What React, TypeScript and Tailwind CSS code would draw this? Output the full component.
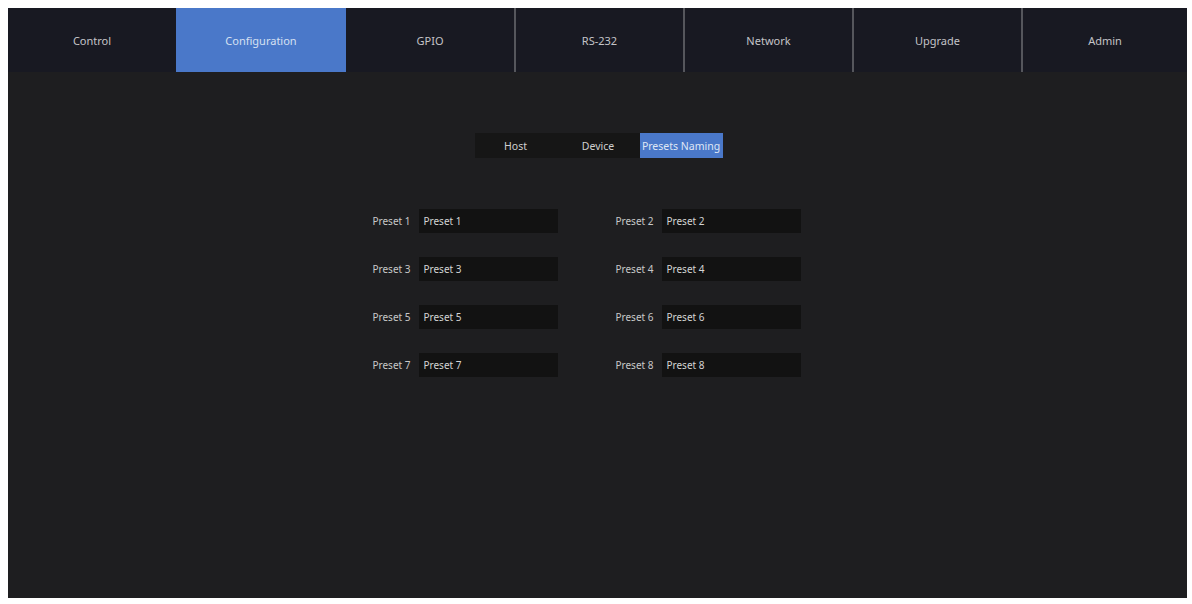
const tabs = [
  { label: "Control", w: "w-[168px]" },
  { label: "Configuration", w: "w-[170px]" },
  { label: "GPIO", w: "w-[168px]" },
  { label: "RS-232", w: "w-[169px]" },
  { label: "Network", w: "w-[169px]" },
  { label: "Upgrade", w: "w-[169px]" },
  { label: "Admin", w: "flex-1" },
];
const subTabs = ["Host", "Device", "Presets Naming"];
const presets = [1, 2, 3, 4, 5, 6, 7, 8];

export default function App() {
  return (
    <div className="w-[1192px] h-[604px] bg-white p-2 pb-[6px] pr-[5px] font-['Noto_Sans',sans-serif]">
      <div className="w-full h-full bg-[#1e1e20] flex flex-col">
        <nav className="flex h-16 bg-[#181922]">
          {tabs.map((t, i) => (
            <div
              key={t.label}
              className={
                t.w +
                " flex items-center justify-center pt-[3px] text-[11px] " +
                (i === 1 ? "bg-[#4a78c9] text-[#d6e0f2]" : "text-[#c4c4c8]") +
                (i >= 3 ? " border-l-2 border-[#55565c]" : "")
              }
            >
              {t.label}
            </div>
          ))}
        </nav>

        <div className="flex justify-center mt-[61px] pl-[2px]">
          <div className="flex h-[25px] bg-[#161616]">
            {subTabs.map((s, i) => (
              <div
                key={s}
                className={
                  "flex items-center justify-center pt-[2px] text-[10.5px] " +
                  (i === 0 ? "w-[82px] text-[#cfcfcf]" : i === 1 ? "w-[83px] text-[#cfcfcf]" : "w-[83px] bg-[#4a78c9] text-[#dfe6f5]")
                }
              >
                {s}
              </div>
            ))}
          </div>
        </div>

        <div className="flex justify-center mt-[51px] pr-[22px]">
          <div className="grid grid-cols-2 gap-x-[58px] gap-y-[24px]">
            {presets.map((n) => (
              <div key={n} className="flex items-center h-[24px]">
                <span className="w-[46px] text-[10px] text-[#c8c8c8] whitespace-nowrap">Preset {n}</span>
                <div className="w-[139px] h-[24px] bg-[#121212] flex items-center pl-[5px] text-[10px] text-[#d4d4d4]">
                  Preset {n}
                </div>
              </div>
            ))}
          </div>
        </div>
      </div>
    </div>
  );
}
